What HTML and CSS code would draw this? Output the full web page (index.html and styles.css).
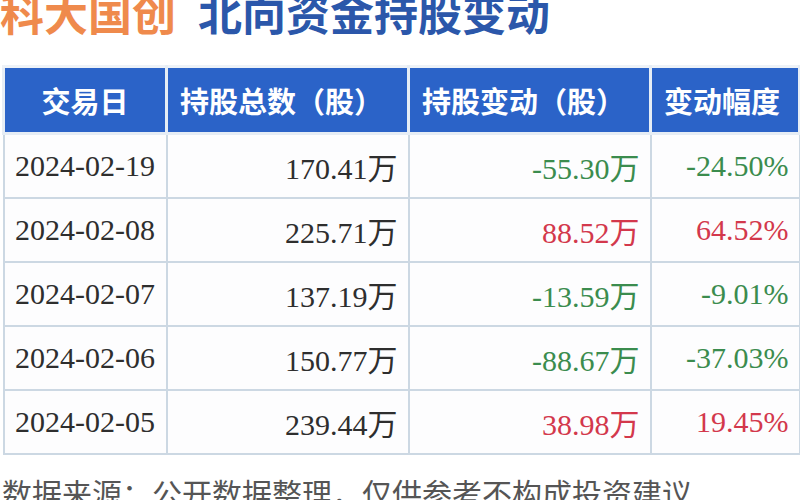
FILE: index.html
```html
<!DOCTYPE html>
<html lang="zh-CN">
<head>
<meta charset="utf-8">
<link rel="stylesheet" href="styles.css">
</head>
<body>
<div class="page">
  <div class="title"><span class="stock">科大国创</span><span class="topic">北向资金持股变动</span></div>
  <table class="grid">
    <colgroup>
      <col class="c1"><col class="c2"><col class="c3"><col class="c4">
    </colgroup>
    <thead>
      <tr><th class="center">交易日</th><th>持股总数（股）</th><th>持股变动（股）</th><th>变动幅度</th></tr>
    </thead>
    <tbody>
      <tr><td class="date">2024-02-19</td><td>170.41万</td><td class="down">-55.30万</td><td class="down">-24.50%</td></tr>
      <tr><td class="date">2024-02-08</td><td>225.71万</td><td class="up">88.52万</td><td class="up">64.52%</td></tr>
      <tr><td class="date">2024-02-07</td><td>137.19万</td><td class="down">-13.59万</td><td class="down">-9.01%</td></tr>
      <tr><td class="date">2024-02-06</td><td>150.77万</td><td class="down">-88.67万</td><td class="down">-37.03%</td></tr>
      <tr><td class="date">2024-02-05</td><td>239.44万</td><td class="up">38.98万</td><td class="up">19.45%</td></tr>
    </tbody>
  </table>
  <div class="note">数据来源：公开数据整理，仅供参考不构成投资建议</div>
</div>
</body>
</html>
```
FILE: styles.css
```css
html, body {
  margin: 0;
  padding: 0;
  background: #ffffff;
}
.page {
  width: 800px;
  height: 500px;
  overflow: hidden;
  background: #ffffff;
}
.title {
  margin-top: -11px;
  margin-left: 0;
  height: 46px;
  line-height: 46px;
  font-family: "Noto Sans CJK SC", sans-serif;
  font-weight: 700;
  font-size: 44px;
  white-space: nowrap;
}
.stock {
  color: #ef8a4c;
  margin-right: 22px;
}
.topic {
  color: #2b57aa;
}
.grid {
  margin-top: 30px;
  margin-left: 2px;
  width: 796px;
  border-collapse: collapse;
  table-layout: fixed;
}
.c1 { width: 163px; }
.c2 { width: 242px; }
.c3 { width: 242px; }
.c4 { width: 149px; }
.grid th {
  height: 64px;
  padding: 0 12px;
  background: #2b63c8;
  color: #ffffff;
  font-family: "Noto Sans CJK SC", sans-serif;
  font-weight: 700;
  font-size: 29px;
  text-align: left;
  border: 3px solid #e6edf5;
  border-top-color: #eef2f7;
}
.grid th.center {
  text-align: center;
}
.grid td {
  height: 62px;
  padding: 0 10px;
  font-family: "Liberation Serif", "Noto Sans CJK SC", serif;
  font-size: 30px;
  color: #2e2e2e;
  text-align: right;
  border: 2px solid #ccd8e3;
  background: #fdfdfe;
}
.grid td.date {
  text-align: center;
  padding: 0 4px;
}
.grid td.up {
  color: #d3384c;
}
.grid td.down {
  color: #3b8c4e;
}
.note {
  margin-top: 15px;
  margin-left: 2px;
  font-family: "Noto Sans CJK SC", sans-serif;
  font-size: 30px;
  color: #555555;
  white-space: nowrap;
}
```
